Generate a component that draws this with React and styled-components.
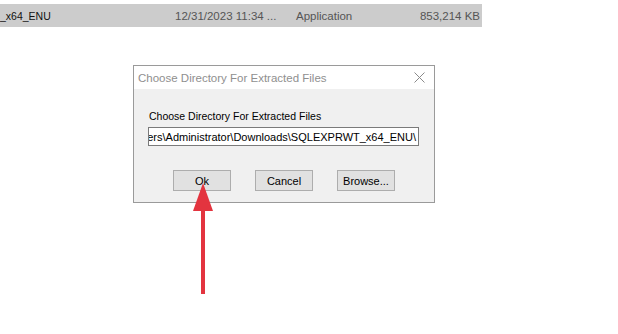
import React from 'react';
import styled, { createGlobalStyle } from 'styled-components';

const Global = createGlobalStyle`
  html, body {
    margin: 0;
    padding: 0;
    background: #ffffff;
  }
  body {
    font-family: "Liberation Sans", Arial, sans-serif;
    font-size: 11px;
    color: #000;
  }
`;

const Page = styled.div`
  position: relative;
  width: 618px;
  height: 334px;
  overflow: hidden;
  padding-top: 4px;
  box-sizing: border-box;
`;

const FileRow = styled.div`
  display: flex;
  align-items: center;
  width: 482px;
  height: 23px;
  background: #cccccc;
  font-size: 11.5px;
`;

const Cell = styled.span`
  width: ${p => p.w}px;
  flex: none;
  white-space: nowrap;
  font-size: ${p => (p.name ? '10.5px' : '11.5px')};
  text-align: ${p => (p.right ? 'right' : 'left')};
  color: ${p => (p.muted ? '#555' : '#111')};
`;

const Dialog = styled.div`
  margin: 38px 0 0 133px;
  width: 302px;
  height: 138px;
  box-sizing: border-box;
  border: 1px solid #9a9a9a;
  background: #f0f0f0;
  display: flex;
  flex-direction: column;
`;

const TitleBar = styled.div`
  height: 23px;
  background: #ffffff;
  display: flex;
  align-items: center;
  justify-content: space-between;
  padding: 0 9px 0 4px;
  color: #8f8f8f;
  font-size: 11.5px;
`;

const Body = styled.div`
  flex: 1;
  padding: 20px 14px 0 14px;
  display: flex;
  flex-direction: column;
`;

const Label = styled.div`
  padding-left: 1px;
  font-size: 10.5px;
  line-height: 14px;
`;

const PathBox = styled.div`
  margin-top: 4px;
  width: 271px;
  height: 19px;
  box-sizing: border-box;
  border: 1px solid #7a7a7a;
  background: #fff;
  display: flex;
  justify-content: flex-end;
  align-items: center;
  overflow: hidden;
  white-space: nowrap;
  padding-right: 2px;
  font-size: 11px;
`;

const Buttons = styled.div`
  display: flex;
  gap: 24px;
  margin-top: 24px;
  padding-left: 25px;
`;

const Button = styled.div`
  width: 58px;
  height: 21px;
  box-sizing: border-box;
  border: 1px solid #adadad;
  background: #e1e1e1;
  display: flex;
  align-items: center;
  justify-content: center;
  font-size: 11px;
`;

const Arrow = styled.svg`
  position: absolute;
  left: 190px;
  top: 182px;
`;

export default function App() {
  return (
    <Page>
      <Global />
      <FileRow>
        <Cell w={175} name>_x64_ENU</Cell>
        <Cell w={121} muted>12/31/2023 11:34 ...</Cell>
        <Cell w={100} muted>Application</Cell>
        <Cell w={84} right muted>853,214 KB</Cell>
      </FileRow>
      <Dialog>
        <TitleBar>
          <span>Choose Directory For Extracted Files</span>
          <svg width="11" height="11" viewBox="0 0 11 11">
            <path d="M0.5 0.5 L10.5 10.5 M10.5 0.5 L0.5 10.5" stroke="#8a8a8a" strokeWidth="1" />
          </svg>
        </TitleBar>
        <Body>
          <Label>Choose Directory For Extracted Files</Label>
          <PathBox>C:\Users\Administrator\Downloads\SQLEXPRWT_x64_ENU\</PathBox>
          <Buttons>
            <Button>Ok</Button>
            <Button>Cancel</Button>
            <Button>Browse...</Button>
          </Buttons>
        </Body>
      </Dialog>
      <Arrow width="26" height="114" viewBox="0 0 26 114">
        <path d="M13 1 L23 29 L3 29 Z" fill="#e3343f" />
        <rect x="11" y="27" width="4" height="85" fill="#e3343f" />
      </Arrow>
    </Page>
  );
}
